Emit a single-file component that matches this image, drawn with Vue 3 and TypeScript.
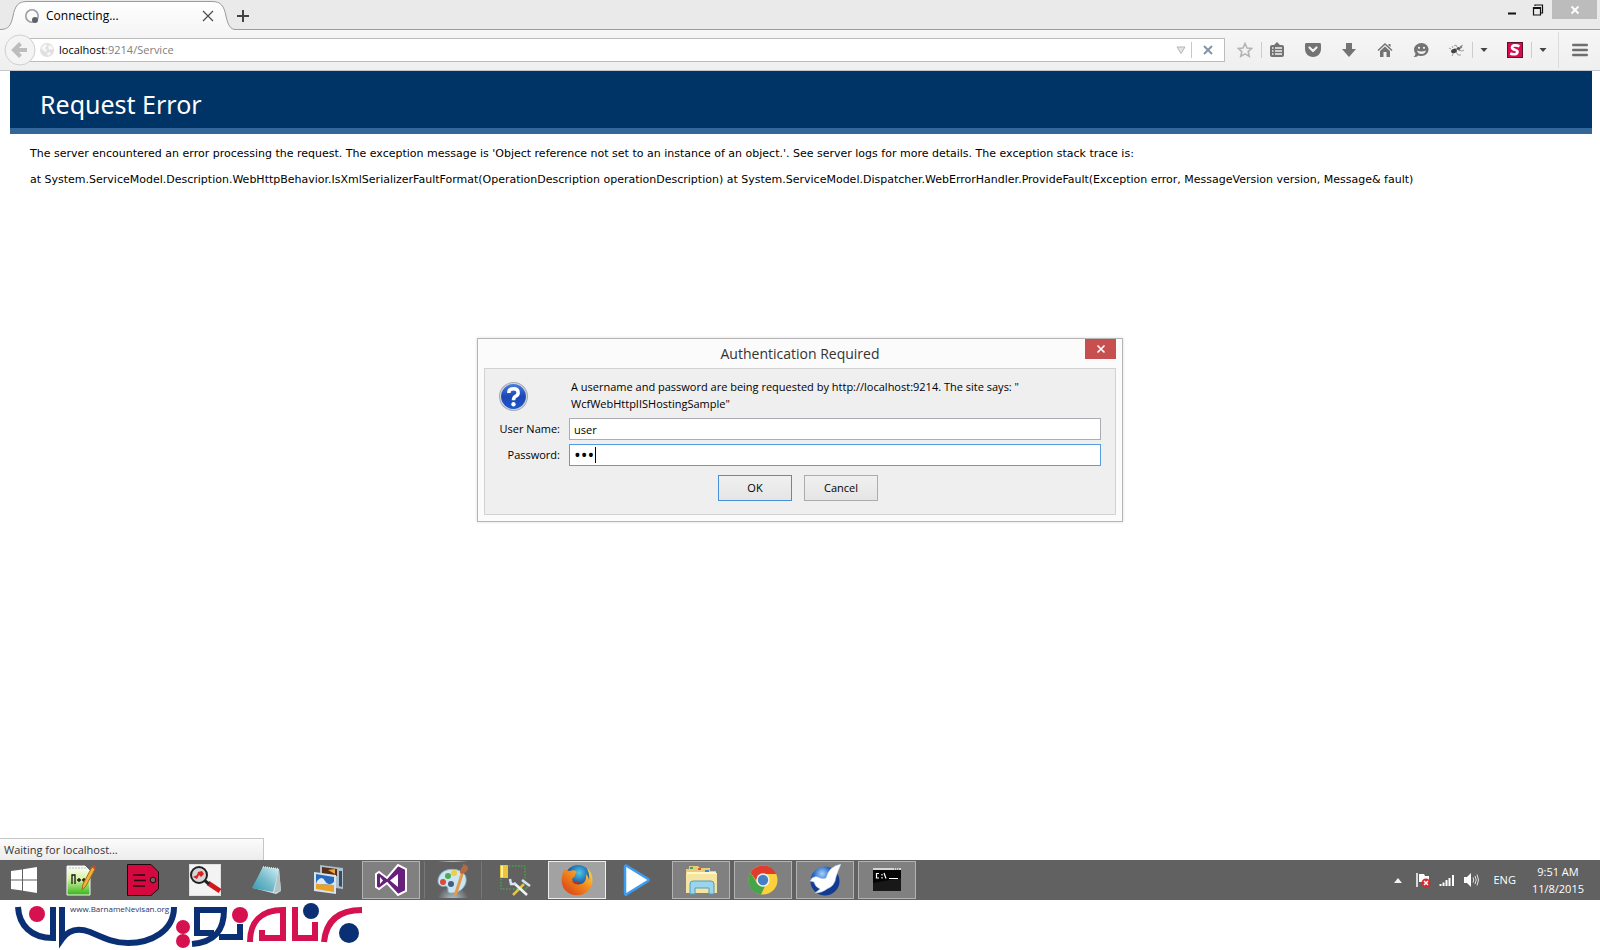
<script setup lang="ts">
import { ref } from 'vue'

const username = ref<string>('user')
const password = ref<string>('abc')
const address = { host: 'localhost', rest: ':9214/Service' }
const stackTrace: string =
  'at System.ServiceModel.Description.WebHttpBehavior.IsXmlSerializerFaultFormat(OperationDescription operationDescription) at System.ServiceModel.Dispatcher.WebErrorHandler.ProvideFault(Exception error, MessageVersion version, Message& fault)'
</script>

<template>
  <div class="screen">
    <header class="tabs">
      <div class="tab">
        <svg class="tab-shape" viewBox="0 0 236 30" aria-hidden="true">
          <defs>
            <linearGradient id="tabFill" x1="0" y1="0" x2="0" y2="1">
              <stop offset="0" stop-color="#fefefe" />
              <stop offset="1" stop-color="#f6f6f6" />
            </linearGradient>
          </defs>
          <path d="M0 29.5C9 29.5 11 25 13 16C15 6 18 1.500 27 1.500H212C221 1.500 224 6 226 16C228 25 230 29.500 236 29.500V31H0Z" fill="url(#tabFill)" />
          <path d="M0 29.5C9 29.5 11 25 13 16C15 6 18 1.500 27 1.500H212C221 1.500 224 6 226 16C228 25 230 29.500 236 29.500" fill="none" stroke="#9b9b9b" />
        </svg>
        <div class="tab-content">
          <svg class="spinner" viewBox="0 0 16 16" aria-hidden="true">
            <circle cx="8" cy="8" r="6.200" fill="none" stroke="#9a9fa5" stroke-width="1.600" />
            <circle cx="11" cy="12" r="3" fill="#5d6268" />
          </svg>
          <span class="tab-title">Connecting...</span>
          <button class="tab-close" type="button" aria-label="Close tab">
            <svg viewBox="0 0 12 12"><path d="M1 1L11 11M11 1L1 11" stroke="#505050" stroke-width="1.300" /></svg>
          </button>
        </div>
      </div>
      <button class="new-tab" type="button" aria-label="New tab">
        <svg viewBox="0 0 12 12"><path d="M6 0V12M0 6H12" stroke="#444" stroke-width="2" /></svg>
      </button>
      <div class="window-controls">
        <button type="button" aria-label="Minimize">
          <svg viewBox="0 0 12 12"><path d="M2 9.500H10" stroke="#111" stroke-width="2" /></svg>
        </button>
        <button type="button" aria-label="Restore">
          <svg viewBox="0 0 12 12"><path d="M3 2V1H10.500V9H9M1.500 3.500H8.500V11H1.500Z" fill="none" stroke="#111" stroke-width="1.200" /><path d="M1 4H9" stroke="#111" stroke-width="2" /></svg>
        </button>
        <button class="win-close" type="button" aria-label="Close window">
          <svg viewBox="0 0 12 12"><path d="M2.500 2.500L9.500 9.500M9.500 2.500L2.500 9.500" stroke="#fff" stroke-width="1.800" /></svg>
        </button>
      </div>
    </header>

    <nav class="toolbar" aria-label="Navigation">
      <button class="back" type="button" aria-label="Back">
        <svg viewBox="0 0 32 32">
          <circle cx="16" cy="16" r="15" fill="#f4f4f4" stroke="#cfcfcf" />
          <path d="M10.500 16H23M16.500 9.500L10 16L16.500 22.500" fill="none" stroke="#bdbdbd" stroke-width="4" />
        </svg>
      </button>
      <div class="urlbar">
        <svg class="globe" viewBox="0 0 16 16" aria-hidden="true">
          <circle cx="8" cy="8" r="7" fill="#e0e0e0" />
          <path d="M2 6Q4 3 7 2L8 4L6 6L8 8L7 10L5 9ZM10 3L13 4L14 7L11 8L9 6ZM8 11L11 10L12 12L9 14Z" fill="#f8f8f8" />
        </svg>
        <a class="url" href="#">{{ address.host }}<span>{{ address.rest }}</span></a>
        <button class="drop" type="button" aria-label="History">
          <svg viewBox="0 0 10 8"><path d="M1 1H9L5 7.500Z" fill="#e4e4e4" stroke="#b5b5b5" /></svg>
        </button>
        <button class="stop" type="button" aria-label="Stop">
          <svg viewBox="0 0 10 10"><path d="M1 1L9 9M9 1L1 9" stroke="#8395a8" stroke-width="2" /></svg>
        </button>
      </div>
      <div class="tools">
        <button class="w-star" type="button" aria-label="Bookmark">
          <svg viewBox="0 0 16 16"><path d="M8 1.500L10 6L14.700 6.400L11.200 9.600L12.300 14.300L8 11.900L3.700 14.300L4.800 9.600L1.300 6.400L6 6Z" fill="none" stroke="#b4b4b4" stroke-width="1.600" /></svg>
        </button>
        <button class="w-list edge" type="button" aria-label="Bookmarks list">
          <svg viewBox="0 0 16 16"><path d="M5 3L8 0L11 3H13Q15 3 15 5V13Q15 15 13 15H3Q1 15 1 13V5Q1 3 3 3Z" fill="#737373" /><path d="M3 6H4.500M6 6H13M3 9H4.500M6 9H13M3 12H4.500M6 12H13" stroke="#f2f2f2" stroke-width="1.500" /></svg>
        </button>
        <button type="button" aria-label="Pocket">
          <svg viewBox="0 0 16 16"><path d="M1 1H15Q16 1 16 3V7C16 12 12 15 8 15S0 12 0 7V3Q0 1 1 1Z" fill="#737373" /><path d="M4.500 5.500L8 9L11.500 5.500" fill="none" stroke="#f2f2f2" stroke-width="2.200" stroke-linecap="round" stroke-linejoin="round" /></svg>
        </button>
        <button type="button" aria-label="Downloads">
          <svg viewBox="0 0 16 16"><path d="M5 1H11V7H15L8 15L1 7H5Z" fill="#737373" /></svg>
        </button>
        <button type="button" aria-label="Home">
          <svg viewBox="0 0 16 16"><path d="M8 1L15.500 8L14.500 9L8 3L1.500 9L.5 8ZM11.500 2H13.500V5L11.500 3.500Z" fill="#737373" /><path d="M3 9L8 4.500L13 9V15H9.500V10H6.500V15H3Z" fill="#737373" /></svg>
        </button>
        <button type="button" aria-label="Chat">
          <svg viewBox="0 0 16 16"><path d="M8.500 1C12.500 1 15.500 4 15.500 7.500S12.500 14 8.500 14Q7 14 5.500 13.500Q3 15.500 .5 15Q2.500 13.500 2.500 11.500Q1 9.500 1 7.500C1 4 4.500 1 8.500 1Z" fill="#737373" /><path d="M4 8.500Q8.500 10.500 13 8.500Q12 12 8.500 12T4 8.500Z" fill="#f2f2f2" /><circle cx="6" cy="5.800" r="1.100" fill="#f2f2f2" /><circle cx="11" cy="5.800" r="1.100" fill="#f2f2f2" /></svg>
        </button>
        <button class="w-bug" type="button" aria-label="Firebug">
          <svg viewBox="0 0 16 16"><ellipse cx="5" cy="9" rx="3" ry="2.200" fill="#444" transform="rotate(-20 5 9)" /><ellipse cx="9.500" cy="6.500" rx="2" ry="1.500" fill="#555" /><circle cx="12" cy="5" r="1.300" fill="#888" /><path d="M2 7L0 6M4 12L3 14M7 10L9 13L12 13M9 8L13 9L15 8M8 5L7 3L5 4M12 4L14 3M4 6L3 4" fill="none" stroke="#888" stroke-width=".8" /></svg>
        </button>
        <button class="w-arrow edge" type="button" aria-label="Firebug menu">
          <svg viewBox="0 0 16 16"><path d="M4.500 6H11.500L8 10Z" fill="#444" /></svg>
        </button>
        <button class="w-s" type="button" aria-label="S add-on">
          <svg viewBox="0 0 16 16"><rect x=".5" y=".5" width="15" height="15" fill="#d80b4f" stroke="#5d1030" /><path d="M12.500 4.200C9 2.800 5.300 3 5 5.500C4.800 8.200 11 7.200 10.500 10C10.100 12.600 6.500 12.800 3.200 11.500" fill="none" stroke="#fff" stroke-width="2.600" /></svg>
        </button>
        <button class="w-arrow edge" type="button" aria-label="S add-on menu">
          <svg viewBox="0 0 16 16"><path d="M4.500 6H11.500L8 10Z" fill="#444" /></svg>
        </button>
        <button class="menu" type="button" aria-label="Open menu">
          <svg viewBox="0 0 16 16"><path d="M1.200 3H14.800M1.200 8H14.800M1.200 13H14.800" stroke="#6e6e6e" stroke-width="2.400" stroke-linecap="round" /></svg>
        </button>
      </div>
    </nav>

    <main class="page">
      <div class="banner"><h1>Request Error</h1></div>
      <div class="message">
        <p>The server encountered an error processing the request. The exception message is 'Object reference not set to an instance of an object.'. See server logs for more details. The exception stack trace is:</p>
        <p>{{ stackTrace }}</p>
      </div>

      <form class="dialog" role="dialog" aria-labelledby="dialog-title" @submit.prevent>
        <div class="dialog-title">
          <h2 id="dialog-title">Authentication Required</h2>
          <button class="dialog-close" type="button" aria-label="Close dialog">
            <svg viewBox="0 0 10 10"><path d="M1.500 1.500L8.500 8.500M8.500 1.500L1.500 8.500" stroke="#fff" stroke-width="1.600" /></svg>
          </button>
        </div>
        <div class="dialog-body">
          <svg class="question" viewBox="0 0 28 28" aria-hidden="true">
            <defs>
              <linearGradient id="qBlue" x1="0" y1="0" x2="0" y2="1">
                <stop offset="0" stop-color="#4a7be0" />
                <stop offset=".5" stop-color="#1d47b4" />
                <stop offset="1" stop-color="#1a58d0" />
              </linearGradient>
            </defs>
            <circle cx="14" cy="14" r="13.500" fill="#d3d7dc" stroke="#a7adb5" />
            <circle cx="14" cy="14" r="12" fill="url(#qBlue)" />
            <path d="M9.500 10.500Q9.500 6.500 14 6.500T18.500 10.500Q18.500 12.500 16 13.800Q14 15 14 17.500" fill="none" stroke="#fff" stroke-width="3.400" />
            <circle cx="14" cy="21.500" r="2.100" fill="#fff" />
          </svg>
          <p class="prompt">A username and password are being requested by http://localhost:9214. The site says: "<br />WcfWebHttpIISHostingSample"</p>
          <label for="user-name">User Name:</label>
          <input id="user-name" v-model="username" type="text" autocomplete="off" />
          <label for="pass-word">Password:</label>
          <div class="focused">
            <input id="pass-word" v-model="password" type="password" autocomplete="off" />
            <span class="caret"></span>
          </div>
          <div class="actions">
            <button class="primary" type="submit">OK</button>
            <button type="button">Cancel</button>
          </div>
        </div>
      </form>

      <div class="status">Waiting for localhost...</div>
    </main>

    <footer class="taskbar">
      <button class="start" type="button" aria-label="Start">
        <svg viewBox="0 0 28 28"><path d="M1 5L12 3.400V13.400H1ZM13 3.200L27 1V13.400H13ZM1 14.400H12V24.600L1 23ZM13 14.400H27V27L13 24.800Z" fill="#fff" /></svg>
      </button>
      <button class="task" type="button" aria-label="Notepad++">
        <svg viewBox="0 0 32 32">
          <defs><linearGradient id="npp" x1="0" y1="0" x2="0" y2="1"><stop offset="0" stop-color="#fff" /><stop offset=".45" stop-color="#d4f2a0" /><stop offset="1" stop-color="#35b51b" /></linearGradient></defs>
          <path d="M2 2H20L25 7V31H2Z" fill="url(#npp)" stroke="#f4f4f4" /><path d="M4 4H21" stroke="#bbb" stroke-dasharray="2 1" />
          <path d="M7 20V11H10V20M12 16H16M14 14V18M17 16H21M19 14V18" fill="none" stroke="#151515" stroke-width="1.300" />
          <path d="M27 3L30 5L21 22L17 26L18 20Z" fill="#f0b23a" stroke="#a66d19" /><path d="M27 3L28 1L31 3L30 5Z" fill="#c64b37" />
        </svg>
      </button>
      <button class="task" type="button" aria-label="Tag">
        <svg viewBox="0 0 32 32"><path d="M.500 .500H24L31.500 8V25L24 31.500H.500Z" fill="#d5083f" stroke="#1b0b10" /><path d="M6 11H18M7 16.500H19M6 22H18" stroke="#2b0511" stroke-width="1.300" /><circle cx="26" cy="16" r="2.800" fill="#666" stroke="#250711" /></svg>
      </button>
      <button class="task" type="button" aria-label="Search">
        <svg viewBox="0 0 32 32"><rect width="32" height="32" fill="#e0e0e0" /><rect x="1" y="1" width="30" height="30" fill="#f3f3f3" /><path d="M19 19L31 27" stroke="#d3171b" stroke-width="5" /><path d="M15 16L20 20" stroke="#222" stroke-width="3" /><circle cx="10" cy="11" r="8" fill="#d6d6d6" stroke="#222" stroke-width="2" /><path d="M4 13L8 11L9 8L13 7L15 10L12 13L10 11L8 15Z" fill="#df1f20" /></svg>
      </button>
      <button class="task" type="button" aria-label="Notepad">
        <svg viewBox="0 0 32 32"><defs><linearGradient id="pad" x1="1" y1="0" x2="0" y2="1"><stop stop-color="#d5f2f5" /><stop offset=".5" stop-color="#77bccc" /><stop offset="1" stop-color="#329aaf" /></linearGradient></defs><path d="M12 3L28 5L30 27L25 30L2 24Z" fill="#dce4e2" /><path d="M12 3L28 5L22 28L1 24Z" fill="url(#pad)" /><path d="M12 3L28 5" stroke="#d9e6e9" stroke-width="2" stroke-dasharray="1 1" /><path d="M28 5L30 27L23 29Z" fill="#b1c4c7" /></svg>
      </button>
      <button class="task" type="button" aria-label="Photos">
        <svg viewBox="0 0 32 32"><path d="M7 1L30 4V25L7 22Z" fill="#aebfce" /><path d="M9 3L24 5V12H9Z" fill="#5a2f15" /><path d="M15 6L22 5V10Z" fill="#efa639" /><path d="M26 7L29 7V23L26 22Z" fill="#3a4c60" /><path d="M1 8L23 11V30L1 27Z" fill="#d6e5ed" /><path d="M3 10L21 13V22L3 20Z" fill="#2669bd" /><path d="M4 17Q9 11 12 17T21 18V21L3 20Z" fill="#dceafa" /><path d="M3 20L21 21V28L3 25Z" fill="#e9a128" /></svg>
      </button>
      <button class="task open" type="button" aria-label="Visual Studio">
        <svg viewBox="0 0 32 32"><path d="M1 10L4 8L12 14L23 1L31 5V27L23 31L12 19L4 25L1 23Z" fill="#68217a" stroke="#fff" stroke-width="2" /><path d="M5 13V20L8 16.500ZM23 10L15 16.500L23 23Z" fill="#fff" /></svg>
      </button>
      <button class="task grouped glow" type="button" aria-label="Paint">
        <svg viewBox="0 0 32 32"><path d="M3 11C7 4 22 3 28 11C32 19 25 30 13 29C9 28 13 24 9 22C1 24-1 17 3 11Z" fill="#cbe6f0" stroke="#89b5cd" /><circle cx="11" cy="12" r="3" fill="#4aab51" /><circle cx="17" cy="9" r="3" fill="#f0ce42" /><circle cx="6" cy="18" r="3" fill="#dc493a" /><circle cx="14" cy="20" r="3" fill="#465d81" /><path d="M27 4L18 32" stroke="#e39a4c" stroke-width="3" /><path d="M23 9C23 3 27 4 26 0Q32 2 31 5Q29 9 25 10Z" fill="#b46a44" /></svg>
      </button>
      <button class="task" type="button" aria-label="Tools">
        <svg viewBox="0 0 32 32"><path d="M10 2H26V15M2 15V25H12M14 25H28V20" fill="none" stroke="#39c53a" stroke-dasharray="1.500 1.500" /><path d="M1 1H9V14H1Z" fill="#edc537" /><path d="M3 2V13" stroke="#fff3a2" stroke-width="2" /><path d="M25 20L14 31" stroke="#dfc54b" stroke-width="2.500" /><path d="M15 19L28 31" stroke="#f2f2f2" stroke-width="2.500" /><path d="M23 16L27 19L31 22M11 15L12 20L17 20" fill="none" stroke="#d5e3f3" stroke-width="2.500" /></svg>
      </button>
      <button class="task open current" type="button" aria-label="Firefox">
        <svg viewBox="0 0 32 32"><defs><radialGradient id="fox" cx=".55" cy=".3"><stop stop-color="#4cc8ec" /><stop offset="1" stop-color="#114793" /></radialGradient><linearGradient id="flame" x1="1" y1="0" x2="0" y2="1"><stop stop-color="#ffe34a" /><stop offset=".45" stop-color="#f48a1c" /><stop offset="1" stop-color="#d33517" /></linearGradient></defs><circle cx="17" cy="14" r="13" fill="url(#fox)" /><path d="M4 5Q6 7 9 7Q13 5 16 8Q14 9 14 12L11 15Q13 22 20 20Q26 18 25 10Q28 13 28 16Q29 11 26 4C33 10 33 20 28 26C22 33 10 33 4 26C-1 20 0 11 4 5Z" fill="url(#flame)" /><path d="M10 17Q15 19 19 17Q17 21 14 20Z" fill="#bd351a" /></svg>
      </button>
      <button class="task" type="button" aria-label="Player">
        <svg viewBox="0 0 32 32"><path d="M2 3Q2 .500 4 2L25 15Q26 16 25 17L4 30Q2 32 2 29Z" fill="#fff" stroke="#3b9cf1" stroke-width="2.500" /></svg>
      </button>
      <button class="task open" type="button" aria-label="File Explorer">
        <svg viewBox="0 0 32 32"><path d="M1 5H4V2H13L15 4H25V7H31V29H1Z" fill="#e9cc76" /><path d="M1 9H32V29H1Z" fill="#f6e5a0" /><path d="M2 9H31" stroke="#fff6cc" stroke-width="2" /><path d="M5 3H8V5H5Z" fill="#49a359" /><path d="M13 4H16V6H13Z" fill="#cf5a3c" /><path d="M20 6H24V8H20Z" fill="#378ecb" /><path d="M5 30V20Q5 17 8 17H26Q29 17 29 20V30H24V24H10V30Z" fill="#9ad5ed" stroke="#4c9cc3" /></svg>
      </button>
      <button class="task open" type="button" aria-label="Chrome">
        <svg viewBox="0 0 32 32"><circle cx="16" cy="16" r="14.500" fill="#fcd13d" /><path d="M3.500 8.500C10-1 24-1 29.500 10H16Q10 10 9.500 17Z" fill="#df3b2f" /><path d="M3.500 8.500L10 19Q13 23 18 22L14 30.500C3 29-2 18 3.500 8.500Z" fill="#46a548" /><circle cx="16" cy="16" r="6.700" fill="#f3f3f3" /><circle cx="16" cy="16" r="5.200" fill="#467fc4" /></svg>
      </button>
      <button class="task open" type="button" aria-label="Messenger">
        <svg viewBox="0 0 32 32"><defs><radialGradient id="globe" cx=".4" cy=".25"><stop stop-color="#a8d2fa" /><stop offset=".6" stop-color="#2365c4" /><stop offset="1" stop-color="#123b93" /></radialGradient></defs><circle cx="16" cy="17" r="14.500" fill="url(#globe)" /><path d="M32 0Q20 2 17 14Q14 15 11 14Q7 11 3 14L1 17L5 18Q6 23 11 25L6 29Q13 29 18 25Q26 22 27 13Q29 7 32 0Z" fill="#fff" stroke="#a4bedf" stroke-width=".5" /></svg>
      </button>
      <button class="task open" type="button" aria-label="Command Prompt">
        <svg viewBox="0 0 32 32"><rect x="2" y="4" width="28" height="23" fill="#050505" /><path d="M2 5H30" stroke="#d6d6d6" stroke-width="2" /><path d="M23 5H29" stroke="#555" stroke-dasharray="1 1" /><path d="M2 19L30 14V27H2Z" fill="#181818" /><path d="M8 9.500H5.500V14H8M11 10V11.500M11 13V14.500M13 9L15 14.500M18 14.500H27" fill="none" stroke="#fff" stroke-width="1.200" /></svg>
      </button>

      <div class="tray">
        <svg class="tray-up" viewBox="0 0 8 16" aria-hidden="true"><path d="M0 11L4 6L8 11Z" fill="#f2f2f2" /></svg>
        <svg class="tray-icon" viewBox="0 0 16 16" aria-hidden="true"><path d="M2 1V15" stroke="#fff" stroke-width="1.500" /><path d="M4 2H9L10 4H14V10H4Z" fill="#fff" /><circle cx="11" cy="11" r="4.500" fill="#d6282d" /><path d="M9 9L13 13M13 9L9 13" stroke="#fff" stroke-width="1.500" /></svg>
        <svg class="tray-icon" viewBox="0 0 16 16" aria-hidden="true"><path d="M1.500 12V14M4.500 10.500V14M7.500 8V14M10.500 6V14M14 3V14" stroke="#fff" stroke-width="2" /></svg>
        <svg class="tray-icon" viewBox="0 0 16 16" aria-hidden="true"><path d="M1 5H4L8 1V15L4 11H1Z" fill="#fff" /><path d="M10 5.500Q11.500 8 10 10.500M12 4Q14.500 8 12 12M14 2.500Q17 8 14 13.500" fill="none" stroke="#e2e2e2" /></svg>
        <span class="lang">ENG</span>
        <time class="clock"><span>9:51 AM</span><span>11/8/2015</span></time>
      </div>
    </footer>

    <div class="brand">
      <svg viewBox="0 0 370 50" role="img" aria-label="BarnameNevisan">
        <g fill="none" stroke="#0b2f74" stroke-width="6">
          <path d="M18 7C19 25 31 38 53 38V7" />
          <path d="M62 7V39C69 29 79 28 90 32C104 38 114 43 128 43C151 43 174 31 174 7" />
          <path d="M214 33H197V10H224C224 28 217 42 192 44M219 37H240V24" />
        </g>
        <g fill="none" stroke="#d51150" stroke-width="6">
          <path d="M250 42C250 22 261 10 283 10V38H262V30" />
          <path d="M295 7V38H315V22" />
          <path d="M324 42C326 22 337 10 362 10" />
        </g>
        <g fill="#d51150">
          <circle cx="37" cy="14" r="8" /><circle cx="183" cy="27" r="7" /><circle cx="183" cy="41" r="7" /><circle cx="240" cy="15" r="8" />
        </g>
        <g fill="#0b2f74"><circle cx="311" cy="11" r="8" /><circle cx="349" cy="33" r="10" /></g>
        <text x="70" y="12">www.BarnameNevisan.org</text>
      </svg>
    </div>
  </div>
</template>

<style>
body {
  margin: 0;
  background: #fff;
}
</style>

<style scoped>
* {
  box-sizing: border-box;
}
.screen {
  display: flex;
  flex-direction: column;
  min-height: 100vh;
  color: #000;
  font: 11px/16px "Open Sans", "Noto Sans", sans-serif;
}
button {
  display: flex;
  align-items: center;
  justify-content: center;
  padding: 0;
  border: 0;
  background: none;
  color: inherit;
  font: inherit;
}
svg {
  display: block;
  flex: none;
}
.tabs {
  display: flex;
  height: 30px;
  background: linear-gradient(#9b9b9b, #9b9b9b) bottom / 100% 1px no-repeat #eaeaea;
}
.tab {
  position: relative;
  width: 236px;
  height: 30px;
}
.tab-shape {
  position: absolute;
  width: 236px;
  height: 30px;
}
.tab-content {
  position: relative;
  display: flex;
  align-items: center;
  height: 32px;
  padding: 0 22px 0 24px;
}
.spinner {
  width: 16px;
  height: 16px;
  margin-right: 6px;
}
.tab-title {
  flex: 1;
  font-size: 12px;
}
.tab-close svg,
.new-tab svg,
.window-controls svg {
  width: 12px;
  height: 12px;
}
.new-tab {
  width: 14px;
  height: 32px;
}
.window-controls {
  display: flex;
  margin-left: auto;
  padding-right: 3px;
}
.window-controls button {
  width: 26px;
  height: 19px;
}
.window-controls .win-close {
  width: 45px;
  margin-left: 1px;
  background: #bcbcbc;
}
.toolbar {
  display: flex;
  align-items: center;
  height: 41px;
  padding-left: 4px;
  border-bottom: 1px solid #c3c8ce;
  background: linear-gradient(#f6f6f6, #efefef);
}
.back {
  z-index: 1;
}
.back svg {
  width: 32px;
  height: 32px;
}
.urlbar {
  display: flex;
  flex: 1;
  align-items: center;
  height: 24px;
  margin-left: -8px;
  padding-left: 10px;
  border: 1px solid #bcbcbc;
  background: #fff;
}
.globe {
  width: 16px;
  height: 16px;
  margin-right: 4px;
}
.url {
  flex: 1;
  color: #000;
  line-height: 18px;
  text-decoration: none;
}
.url span {
  color: #808080;
}
.drop {
  width: 22px;
  height: 16px;
  border-right: 1px solid #c8c8c8;
}
.drop svg {
  width: 10px;
  height: 8px;
}
.stop {
  width: 32px;
  height: 22px;
}
.stop svg {
  width: 10px;
  height: 10px;
}
.tools {
  display: flex;
  align-items: center;
  padding-left: 3px;
}
.tools button {
  width: 36px;
  height: 16px;
}
.tools svg {
  width: 16px;
  height: 16px;
}
.tools .edge {
  border-left: 1px solid #cdcdcd;
}
.tools .w-list {
  justify-content: flex-start;
  width: 34px;
  padding-left: 7px;
}
.tools .w-bug {
  justify-content: flex-start;
  width: 33px;
  padding-left: 10px;
}
.tools .w-arrow {
  width: 22px;
}
.tools .w-star {
  width: 33px;
}
.tools .w-s {
  width: 37px;
  justify-content: flex-end;
  padding-right: 8px;
}
.tools .menu {
  width: 42px;
  height: 36px;
  margin-left: 5px;
  border-left: 1px solid #dcdcdc;
}
.page {
  position: relative;
  flex: 1;
  background: #fff;
}
.banner {
  margin: 0 8px 0 10px;
  padding: 19px 30px 9px;
  border-bottom: 6px solid #336699;
  background: #003366;
  color: #fff;
}
.banner h1 {
  margin: 0;
  font: 25px/29px "Noto Sans", sans-serif;
}
.message {
  padding: 12px 30px;
  font: 11px/16px "DejaVu Sans", sans-serif;
}
.message p {
  margin: 0 0 10px;
}
.dialog {
  position: absolute;
  top: 267px;
  right: 0;
  left: 0;
  width: 646px;
  margin: 0 auto;
  padding: 0 6px 6px;
  border: 1px solid #b5b5b5;
  background: #fbfbfb;
  box-shadow: 0 0 3px #dcdcdc;
}
.dialog-title {
  position: relative;
  height: 29px;
}
.dialog-title h2 {
  margin: 0;
  color: #333;
  font: 14px/29px "Open Sans", sans-serif;
  text-align: center;
}
.dialog-close {
  position: absolute;
  top: 0;
  right: 0;
  width: 31px;
  height: 20px;
  background: #c74f50;
  color: #fff;
}
.dialog-close svg {
  width: 10px;
  height: 10px;
}
.dialog-body {
  display: grid;
  grid-template-columns: 61px 1fr;
  gap: 4px 9px;
  align-items: center;
  padding: 9px 14px 13px 14px;
  border: 1px solid #d2d2d2;
  background: #efefef;
}
.question {
  width: 29px;
  height: 29px;
}
.prompt {
  margin: 0 0 2px;
  padding-left: 2px;
  line-height: 17px;
}
.dialog-body label {
  text-align: right;
  white-space: nowrap;
}
.dialog-body input {
  display: block;
  width: 100%;
  height: 22px;
  padding: 0 4px;
  border: 1px solid #abadb3;
  outline: 0;
  background: #fff;
  color: #000;
  font: inherit;
}
.focused {
  position: relative;
}
.dialog-body .focused input {
  border-color: #569de5;
  font-size: 18px;
}
.caret {
  position: absolute;
  top: 3px;
  left: 26px;
  width: 1px;
  height: 16px;
  background: #000;
}
.actions {
  display: flex;
  grid-column: 1 / -1;
  gap: 12px;
  justify-content: center;
  padding: 5px 4px 0 0;
}
.actions button {
  width: 74px;
  height: 26px;
  border: 1px solid #acacac;
  background: linear-gradient(#f0f0f0, #e5e5e5);
}
.actions .primary {
  border-color: #4a90d9;
}
.status {
  position: absolute;
  bottom: 0;
  left: 0;
  width: 264px;
  padding: 3px 4px 2px;
  border: 1px solid #c6c6c6;
  border-bottom: 0;
  border-left: 0;
  background: linear-gradient(#fcfcfc, #ececec);
  color: #333;
}
.taskbar {
  display: flex;
  gap: 4px;
  align-items: center;
  height: 40px;
  background: #616161;
  color: #fff;
}
.start {
  width: 48px;
}
.start svg {
  width: 28px;
  height: 28px;
}
.task {
  width: 58px;
  height: 38px;
  border: 1px solid transparent;
}
.task svg {
  width: 32px;
  height: 32px;
}
.task.open {
  border-color: #b2b2b2;
  background: #808080;
}
.task.current {
  border-color: #eee;
  background: #a2a2a2;
}
.task.grouped {
  border-right-color: #777;
  border-left-color: #777;
}
.task.glow {
  background: radial-gradient(circle at 50% 110%, #b9d2e2, transparent 16px);
}
.tray {
  display: flex;
  gap: 8px;
  align-items: center;
  margin-left: auto;
  padding-right: 16px;
}
.tray-up {
  width: 8px;
  height: 16px;
  margin-right: 5px;
}
.tray-icon {
  width: 16px;
  height: 16px;
}
.lang {
  margin-left: 6px;
}
.clock {
  display: flex;
  flex-direction: column;
  margin-left: 8px;
  line-height: 17px;
  text-align: center;
}
.brand {
  height: 50px;
  background: #fff;
}
.brand svg {
  width: 370px;
  height: 50px;
}
.brand text {
  fill: #26346f;
  font: 8px "Open Sans", sans-serif;
}
</style>
